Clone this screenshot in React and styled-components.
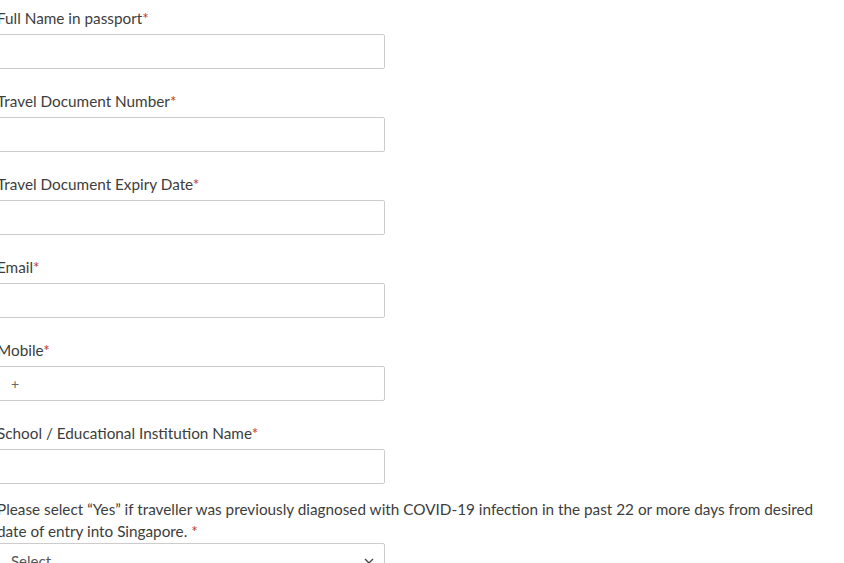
import React from "react";
import styled, { createGlobalStyle } from "styled-components";

const Global = createGlobalStyle`
  html, body { margin: 0; padding: 0; background: #fff; overflow: hidden; }
  body { font-family: Lato, "Noto Sans", sans-serif; }
`;

const Form = styled.form`
  display: flex;
  flex-direction: column;
  width: 838px;
  margin-left: -3px;
  padding-top: 7px;
`;

const Field = styled.div`
  display: flex;
  flex-direction: column;
  margin-bottom: ${(p) => p.$gap ?? 21}px;
`;

const Label = styled.label`
  font-size: 15.3px;
  line-height: 22px;
  color: #3d3d3d;
  margin-bottom: ${(p) => p.$mb ?? 5}px;
`;

const Req = styled.span`
  color: #c0392b;
`;

const Input = styled.div`
  box-sizing: border-box;
  width: 388px;
  height: 35px;
  border: 1px solid #ccc;
  border-radius: 2px;
  display: flex;
  align-items: center;
  padding: 0 13px;
  font-size: 14px;
  color: #666;
`;

const Select = styled(Input)`
  justify-content: space-between;
  height: 36px;
  padding-right: 10px;
  color: #555;
  font-size: 15px;
`;

const fields = [
  "Full Name in passport",
  "Travel Document Number",
  "Travel Document Expiry Date",
  "Email",
  "Mobile",
  "School / Educational Institution Name",
];

export default function App() {
  return (
    <>
      <Global />
      <Form>
        {fields.map((f, i) => (
          <Field key={f} $gap={i === fields.length - 1 ? 14 : 21}>
            <Label>
              {f}
              <Req>*</Req>
            </Label>
            <Input>{f === "Mobile" ? "+" : ""}</Input>
          </Field>
        ))}
        <Field>
          <Label $mb={1}>
            Please select “Yes” if traveller was previously diagnosed with COVID-19 infection in the past 22 or more days from desired date of entry into Singapore. <Req>*</Req>
          </Label>
          <Select>
            <span>Select</span>
            <svg width="10" height="6" viewBox="0 0 10 6" fill="none" stroke="#444" strokeWidth="1.4">
              <path d="M1 1l4 4 4-4" />
            </svg>
          </Select>
        </Field>
      </Form>
    </>
  );
}
